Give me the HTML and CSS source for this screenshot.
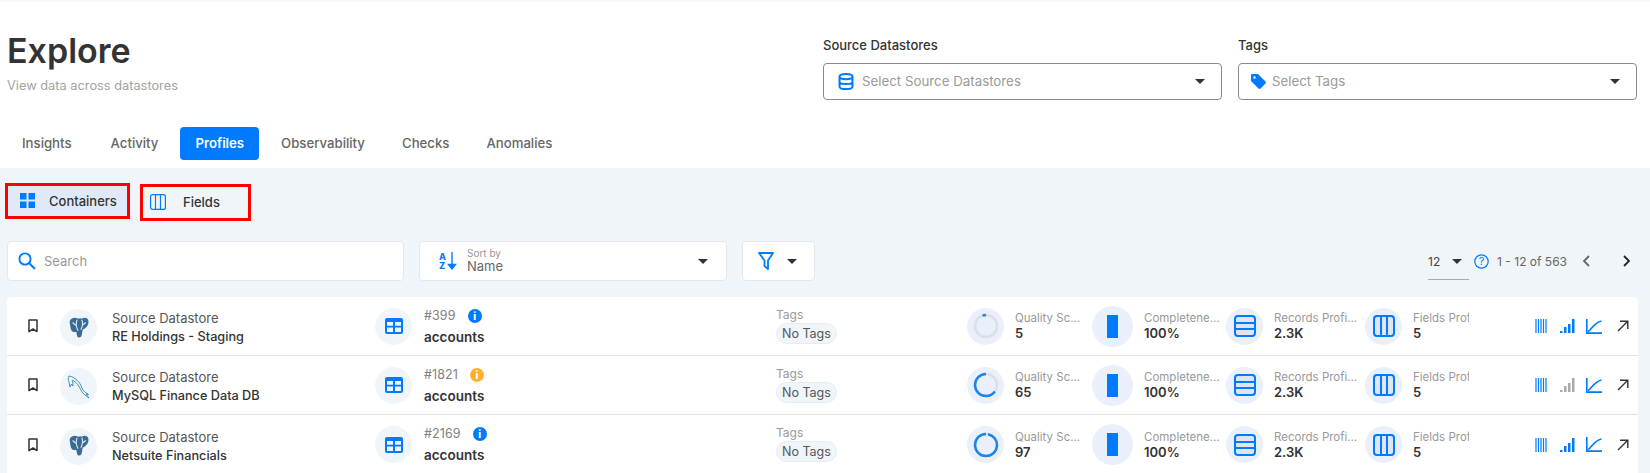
FILE: index.html
```html
<!DOCTYPE html>
<html>
	<head>
		<title>Explore</title>
		<link rel="stylesheet" href="styles.css">
	</head>
	<body>
		<svg class="defs" width="0" height="0">
			<symbol id="i-table" viewBox="0 0 18 16"><path fill="#007aff" fill-rule="evenodd" d="M2 0h14a2 2 0 0 1 2 2v12a2 2 0 0 1-2 2H2a2 2 0 0 1-2-2V2a2 2 0 0 1 2-2zM2 4v3.8h6V4zM10 4v3.8h6V4zM2 9.6V14h6V9.6zM10 9.6V14h6V9.6z"/></symbol>
			<symbol id="i-rows" viewBox="0 0 22 22"><rect x="1" y="1" width="20" height="20" rx="3" fill="#dfe6f2" stroke="#007aff" stroke-width="2"/><path d="M1 8h20M1 14h20" stroke="#007aff" stroke-width="2"/></symbol>
			<symbol id="i-cols" viewBox="0 0 22 22"><rect x="1" y="1" width="20" height="20" rx="3" fill="#dfe6f2" stroke="#007aff" stroke-width="2"/><path d="M8 1v20M14 1v20" stroke="#007aff" stroke-width="2"/></symbol>
			<symbol id="i-mark" viewBox="0 0 12 14"><path d="M2 1h8v11.6L6 10 2 12.6z" fill="none" stroke="#333" stroke-width="1.5" stroke-linejoin="round"/></symbol>
			<symbol id="i-pg" viewBox="0 0 24 24"><path fill="#3a6a96" d="M4 2c3-2 5-1 7 0 2-1 3-1 4 0 3-2 6-1 7 1 1 3 0 6-2 8-1 1-2 2-4 3l-1 6c-1 3-4 3-5 1l-1-5c-3 1-5 0-6-3L2 7c-.5-2 0-4 2-5z"/><path d="M10 3c-1.500 3-1.500 7 1 12M15 3c1.500 3 1 7-1 11M5 6l3.500 3M19.500 6l-4 3" fill="none" stroke="#dfe8f0" stroke-width="1.200"/></symbol>
			<symbol id="i-my" viewBox="0 0 24 24"><path d="M2 1c-1 2-1 4 0 6l1 5 1.500-3 1.500 2c0-2 0-4-1-5 0-1 1-1 2 0 3 2 5 5 7 9 1 3 4 5 8 8l-3-4 2.500.5c-3-2-5-3-6.500-6.500C13 7 8 2 2 1z" fill="none" stroke="#2f86a8" stroke-width=".9" stroke-linejoin="round"/></symbol>
			<symbol id="i-bars" viewBox="0 0 12 14"><path d="M1 0v14M3.5 0v14M6 0v14M8.5 0v14M11 0v14" stroke="#007aff" stroke-width="1.2"/></symbol>
			<symbol id="i-chart" viewBox="0 0 16 15"><path d="M.8 0v14.100H16M2 12.500C6 11 7 4 15.500 2" fill="none" stroke="#007aff" stroke-width="1.600"/></symbol>
			<symbol id="i-open" viewBox="0 0 12 12"><path d="M1 11 10.5 1.500M3 1.200h7.800V9" fill="none" stroke="#333" stroke-width="1.400"/></symbol>
		</svg>

		<header class="top">
			<div class="title">
				<h1>Explore</h1>
				<p>View data across datastores</p>
			</div>
			<div class="selects">
				<div class="field">
					<label>Source Datastores</label>
					<div class="select">
						<svg class="select-icon" width="16" height="17" viewBox="0 0 16 17"><path d="M8 1c3.600 0 6.500 1 6.500 2.600v9.800C14.500 15 11.600 16 8 16s-6.500-1-6.500-2.600V3.600C1.500 2 4.400 1 8 1zM1.500 3.600C1.500 5.200 4.400 6.200 8 6.200s6.500-1 6.500-2.600M1.500 8.500c0 1.600 2.900 2.600 6.500 2.600s6.500-1 6.500-2.600" fill="none" stroke="#007aff" stroke-width="2"/></svg>
						<span>Select Source Datastores</span>
						<i class="caret"></i>
					</div>
				</div>
				<div class="field">
					<label>Tags</label>
					<div class="select tags-select">
						<svg class="select-icon" width="15" height="15" viewBox="0 0 15 15"><path fill="#007aff" fill-rule="evenodd" d="M1 0h6l7.500 7.500a1.500 1.500 0 0 1 0 2L9.500 14.500a1.500 1.500 0 0 1-2 0L0 7V1a1 1 0 0 1 1-1zM3.500 2.300a1.200 1.200 0 1 0 0 2.400 1.200 1.200 0 0 0 0-2.400z"/></svg>
						<span>Select Tags</span>
						<i class="caret"></i>
					</div>
				</div>
			</div>
		</header>

		<nav class="tabs">
			<a>Insights</a>
			<a>Activity</a>
			<a class="active">Profiles</a>
			<a>Observability</a>
			<a>Checks</a>
			<a>Anomalies</a>
		</nav>

		<main class="panel">
			<div class="views">
				<div class="view view-on">
					<svg width="15" height="15" viewBox="0 0 15 15"><path fill="#007aff" d="M0 0h6.500v6.500H0zM8.500 0H15v6.500H8.500zM0 8.500h6.500V15H0zM8.500 8.500H15V15H8.500z"/></svg>
					Containers
				</div>
				<div class="view view-fields">
					<svg width="16" height="16" viewBox="0 0 16 16"><rect x=".6" y=".6" width="14.800" height="14.800" rx="2" fill="none" stroke="#007aff" stroke-width="1.200"/><path d="M5.500 1v14M10.500 1v14" stroke="#007aff" stroke-width="1.200"/></svg>
					Fields
				</div>
			</div>

			<div class="toolbar">
				<div class="box search">
					<svg width="18" height="18" viewBox="0 0 18 18"><circle cx="7" cy="7" r="5.600" fill="none" stroke="#007aff" stroke-width="1.900"/><path d="M11 11l6 6" stroke="#007aff" stroke-width="2"/></svg>
					<span>Search</span>
				</div>
				<div class="box sort">
					<svg width="18" height="18" viewBox="0 0 18 18"><text x="0" y="8" class="az">A</text><text x="0" y="17" class="az">Z</text><path d="M13 0v15M9.500 12.500 13 17l3.500-4.500z" stroke="#007aff" stroke-width="1.400" fill="#007aff"/></svg>
					<div class="sort-text">
						<small>Sort by</small>
						<span>Name</span>
					</div>
					<i class="caret"></i>
				</div>
				<div class="box filter">
					<svg width="16" height="18" viewBox="0 0 16 18"><path d="M1 1h14L10 8.500V17L6.500 14V8.500z" fill="none" stroke="#007aff" stroke-width="1.800" stroke-linejoin="round"/></svg>
					<i class="caret"></i>
				</div>
				<div class="pager">
					<div class="per-page"><span>12</span><i class="caret"></i></div>
					<svg class="help" width="15" height="15" viewBox="0 0 15 15"><circle cx="7.500" cy="7.500" r="6.700" fill="none" stroke="#007aff" stroke-width="1.200"/><text x="7.500" y="11.200" text-anchor="middle" class="qm">?</text></svg>
					<span class="count">1 - 12 of 563</span>
					<svg class="prev" width="8" height="12" viewBox="0 0 8 12"><path d="M7 1 2 6l5 5" fill="none" stroke="#666" stroke-width="1.800"/></svg>
					<svg class="next" width="8" height="12" viewBox="0 0 8 12"><path d="M1 1l5 5-5 5" fill="none" stroke="#222" stroke-width="1.800"/></svg>
				</div>
			</div>

			<div class="card">
				<div class="row">
					<svg class="mark" width="12" height="14"><use href="#i-mark"/></svg>
					<div class="cell cell-ds">
						<div class="disc low"><svg width="22" height="22"><use href="#i-pg"/></svg></div>
						<div class="names"><span>Source Datastore</span><b>RE Holdings - Staging</b></div>
					</div>
					<div class="cell cell-id">
						<div class="disc"><svg width="18" height="16"><use href="#i-table"/></svg></div>
						<div class="names"><div class="ident">#399<i class="dot">i</i></div><b class="bold">accounts</b></div>
					</div>
					<div class="tags"><span>Tags</span><em>No Tags</em></div>
					<div class="cell">
						<div class="disc tint"><svg class="ring" width="26" height="26" viewBox="0 0 26 26"><circle cx="13" cy="13" r="11" class="track"/><circle cx="13" cy="13" r="11" class="arc" pathLength="100" stroke-dasharray="5 100"/></svg></div>
						<div class="metric m-q"><span>Quality Score</span><b>5</b></div>
					</div>
					<div class="cell">
						<div class="disc tint big"><i class="fill"></i></div>
						<div class="metric m-c"><span>Completeness</span><b>100%</b></div>
					</div>
					<div class="cell">
						<div class="disc tint"><svg width="22" height="22"><use href="#i-rows"/></svg></div>
						<div class="metric m-r"><span>Records Profiled</span><b>2.3K</b></div>
					</div>
					<div class="cell">
						<div class="disc tint"><svg width="22" height="22"><use href="#i-cols"/></svg></div>
						<div class="metric m-f"><span>Fields Profiled</span><b>5</b></div>
					</div>
					<div class="actions">
						<svg width="12" height="14"><use href="#i-bars"/></svg>
						<svg width="15" height="14" viewBox="0 0 15 14"><path fill="#007aff" d="M0 12h2.500v2H0zM4 8h2.500v6H4zM8 5h2.500v9H8zM12 0h2.500v14H12z"/></svg>
						<svg class="trend" width="16" height="15"><use href="#i-chart"/></svg>
						<svg width="12" height="12"><use href="#i-open"/></svg>
					</div>
				</div>

				<div class="row">
					<svg class="mark" width="12" height="14"><use href="#i-mark"/></svg>
					<div class="cell cell-ds">
						<div class="disc low"><svg width="24" height="24"><use href="#i-my"/></svg></div>
						<div class="names"><span>Source Datastore</span><b>MySQL Finance Data DB</b></div>
					</div>
					<div class="cell cell-id">
						<div class="disc"><svg width="18" height="16"><use href="#i-table"/></svg></div>
						<div class="names"><div class="ident">#1821<i class="dot warn">i</i></div><b class="bold">accounts</b></div>
					</div>
					<div class="tags"><span>Tags</span><em>No Tags</em></div>
					<div class="cell">
						<div class="disc tint"><svg class="ring" width="26" height="26" viewBox="0 0 26 26"><circle cx="13" cy="13" r="11" class="track"/><circle cx="13" cy="13" r="11" class="arc" pathLength="100" stroke-dasharray="65 100"/></svg></div>
						<div class="metric m-q"><span>Quality Score</span><b>65</b></div>
					</div>
					<div class="cell">
						<div class="disc tint big"><i class="fill"></i></div>
						<div class="metric m-c"><span>Completeness</span><b>100%</b></div>
					</div>
					<div class="cell">
						<div class="disc tint"><svg width="22" height="22"><use href="#i-rows"/></svg></div>
						<div class="metric m-r"><span>Records Profiled</span><b>2.3K</b></div>
					</div>
					<div class="cell">
						<div class="disc tint"><svg width="22" height="22"><use href="#i-cols"/></svg></div>
						<div class="metric m-f"><span>Fields Profiled</span><b>5</b></div>
					</div>
					<div class="actions">
						<svg width="12" height="14"><use href="#i-bars"/></svg>
						<svg width="15" height="14" viewBox="0 0 15 14"><path fill="#aaa" d="M0 12h2.500v2H0zM4 8h2.500v6H4zM8 5h2.500v9H8zM12 0h2.500v14H12z"/></svg>
						<svg class="trend" width="16" height="15"><use href="#i-chart"/></svg>
						<svg width="12" height="12"><use href="#i-open"/></svg>
					</div>
				</div>

				<div class="row">
					<svg class="mark" width="12" height="14"><use href="#i-mark"/></svg>
					<div class="cell cell-ds">
						<div class="disc low"><svg width="22" height="22"><use href="#i-pg"/></svg></div>
						<div class="names"><span>Source Datastore</span><b>Netsuite Financials</b></div>
					</div>
					<div class="cell cell-id">
						<div class="disc"><svg width="18" height="16"><use href="#i-table"/></svg></div>
						<div class="names"><div class="ident">#2169<i class="dot">i</i></div><b class="bold">accounts</b></div>
					</div>
					<div class="tags"><span>Tags</span><em>No Tags</em></div>
					<div class="cell">
						<div class="disc tint"><svg class="ring" width="26" height="26" viewBox="0 0 26 26"><circle cx="13" cy="13" r="11" class="track"/><circle cx="13" cy="13" r="11" class="arc" pathLength="100" stroke-dasharray="97 100"/></svg></div>
						<div class="metric m-q"><span>Quality Score</span><b>97</b></div>
					</div>
					<div class="cell">
						<div class="disc tint big"><i class="fill"></i></div>
						<div class="metric m-c"><span>Completeness</span><b>100%</b></div>
					</div>
					<div class="cell">
						<div class="disc tint"><svg width="22" height="22"><use href="#i-rows"/></svg></div>
						<div class="metric m-r"><span>Records Profiled</span><b>2.3K</b></div>
					</div>
					<div class="cell">
						<div class="disc tint"><svg width="22" height="22"><use href="#i-cols"/></svg></div>
						<div class="metric m-f"><span>Fields Profiled</span><b>5</b></div>
					</div>
					<div class="actions">
						<svg width="12" height="14"><use href="#i-bars"/></svg>
						<svg width="15" height="14" viewBox="0 0 15 14"><path fill="#007aff" d="M0 12h2.500v2H0zM4 8h2.500v6H4zM8 5h2.500v9H8zM12 0h2.500v14H12z"/></svg>
						<svg class="trend" width="16" height="15"><use href="#i-chart"/></svg>
						<svg width="12" height="12"><use href="#i-open"/></svg>
					</div>
				</div>
			</div>
		</main>
	</body>
</html>
```

FILE: styles.css
```css
html, body {
	margin: 0;
	height: 473px;
	overflow: hidden;
}

body {
	background: #fff;
	color: #333;
	font-family: Inter, "Noto Sans", sans-serif;
	font-size: 13px;
	border-top: 2px solid #f8f8f8;
	box-sizing: border-box;
}

.defs {
	display: block;
	height: 0;
}

.caret {
	display: block;
	width: 0;
	height: 0;
	border-left: 5px solid transparent;
	border-right: 5px solid transparent;
	border-top: 5px solid #333;
}

/* header */
.top {
	display: flex;
	justify-content: space-between;
	padding: 28px 13px 0 7px;
}

.title h1 {
	margin: 0;
	font-size: 34px;
	line-height: 42px;
	font-weight: 600;
}

.title p {
	margin: 5px 0 0;
	font-size: 12.800px;
	line-height: 18px;
	color: #a3a3a3;
}

.selects {
	display: flex;
	gap: 16px;
}

.field label {
	display: block;
	font-size: 13px;
	font-weight: 500;
	line-height: 18px;
	margin: 6px 0 9px;
}

.select {
	width: 399px;
	height: 37px;
	box-sizing: border-box;
	border: 1px solid #8a8a8a;
	border-radius: 4px;
	display: flex;
	align-items: center;
	padding: 0 16px 1px 14px;
	color: #9a9a9a;
	font-size: 13.300px;
}

.select span {
	margin-left: 8px;
	flex: 1;
}

.tags-select {
	padding-left: 12px;
}

.tags-select span {
	margin-left: 6px;
}

/* tabs */
.tabs {
	display: flex;
	gap: 7px;
	height: 33px;
	padding-left: 7px;
	margin-top: 27px;
	margin-bottom: 8px;
}

.tabs a {
	display: flex;
	align-items: center;
	padding: 0 15px 1px;
	border-radius: 4px;
	color: #666;
	font-weight: 500;
	font-size: 13.200px;
}

.tabs a:first-child {
	margin-right: 2px;
}

.tabs a.active {
	background: #007aff;
	color: #fff;
	font-weight: 600;
}

/* blue panel */
.panel {
	background: #f0f5fa;
	padding: 15px 12px 0 7px;
	height: 305px;
	box-sizing: border-box;
}

.views {
	display: flex;
	align-items: flex-start;
	gap: 10px;
	margin-left: -2px;
	margin-bottom: 20px;
}

.view {
	display: flex;
	align-items: center;
	box-sizing: border-box;
	height: 36px;
	border: 3px solid #f00;
	padding-bottom: 1px;
	font-size: 13px;
	font-weight: 500;
	gap: 14px;
}

.view-on {
	width: 125px;
	padding-left: 12px;
	background: #dfe9f7;
}

.view-fields {
	width: 111px;
	height: 37px;
	margin-top: 1px;
	padding-left: 7px;
	gap: 17px;
}

/* toolbar */
.toolbar {
	display: flex;
	gap: 15px;
	align-items: center;
	margin-bottom: 16px;
}

.box {
	display: flex;
	align-items: center;
	box-sizing: border-box;
	height: 40px;
	background: #fff;
	border: 1px solid #e4e8ee;
	border-radius: 4px;
}

.search {
	width: 397px;
	padding-left: 10px;
	gap: 8px;
	color: #999;
}

.sort {
	width: 308px;
	padding: 0 18px 0 19px;
	gap: 10px;
}

.az {
	font-size: 9px;
	font-weight: 800;
	fill: #007aff;
}

.sort-text {
	flex: 1;
	display: flex;
	flex-direction: column;
	line-height: 13px;
	margin-top: -2px;
}

.sort-text small {
	font-size: 10px;
	color: #999;
}

.sort-text span {
	font-size: 13px;
	color: #666;
}

.filter {
	width: 73px;
	padding-left: 15px;
	gap: 13px;
}

.pager {
	margin-left: auto;
	display: flex;
	align-items: center;
	padding-right: 7px;
	color: #666;
	font-size: 12px;
}

.per-page {
	box-sizing: border-box;
	width: 41px;
	height: 36px;
	margin-top: 1px;
	display: flex;
	align-items: center;
	justify-content: space-between;
	border-bottom: 1px solid #aaa;
	color: #444;
	padding-right: 7px;
}

.help {
	margin-left: 5px;
}

.qm {
	font-size: 11px;
	fill: #007aff;
}

.count {
	margin-left: 8px;
}

.prev {
	margin-left: 15px;
}

.next {
	margin-left: 33px;
}

/* rows */
.card {
	background: #fff;
	border-radius: 4px 4px 0 0;
}

.row {
	display: grid;
	grid-template-columns: 53px 315px 401px 191px 125px 134px 139px 170px auto;
	align-items: center;
	height: 59px;
	box-sizing: border-box;
	border-bottom: 1px solid #e3e3e3;
}

.row:last-child {
	border-bottom: 0;
}

.mark {
	margin-left: 20px;
}

.cell {
	display: flex;
	align-items: center;
	gap: 11px;
	min-width: 0;
}

.cell-ds {
	gap: 15px;
}

.cell-ds .names {
	gap: 1px;
	margin-top: 3px;
}

.cell-id {
	gap: 12px;
}

.disc {
	flex: none;
	width: 37px;
	height: 37px;
	border-radius: 50%;
	background: #f0f5fa;
	display: flex;
	align-items: center;
	justify-content: center;
}

.disc.low {
	margin-top: 3px;
}

.disc.tint {
	background: #e9f0fb;
}

.disc.big {
	width: 41px;
	height: 41px;
}

.fill {
	display: block;
	width: 11px;
	height: 23px;
	background: #007aff;
}

.ring {
	transform: rotate(-90deg) scaleY(-1);
}

.ring circle {
	fill: none;
	stroke-width: 2.500;
}

.ring .track {
	stroke: #dcdfe4;
}

.ring .arc {
	stroke: #1a84f0;
}

.names {
	display: flex;
	flex-direction: column;
	gap: 3px;
	line-height: 18px;
}

.names span {
	font-size: 13px;
	color: #555;
}

.names b {
	font-size: 12.700px;
	font-weight: 500;
}

.names b.bold {
	font-size: 13.500px;
	font-weight: 600;
}

.ident {
	display: flex;
	align-items: center;
	gap: 12px;
	color: #808080;
	font-size: 12.500px;
	letter-spacing: .1px;
}

.dot {
	width: 14px;
	height: 14px;
	border-radius: 50%;
	background: #007aff;
	color: #fff;
	font-style: normal;
	font-weight: 800;
	font-size: 10px;
	line-height: 14px;
	text-align: center;
	letter-spacing: 0;
}

.dot.warn {
	background: #ffb02e;
}

.tags {
	display: flex;
	flex-direction: column;
	align-items: flex-start;
	gap: 1px;
	margin-top: -2px;
	font-size: 12px;
	color: #999;
	line-height: 15px;
}

.tags em {
	font-style: normal;
	font-size: 12.500px;
	color: #555;
	background: #f0f5fa;
	border: 1px solid #e6ecf5;
	border-radius: 11px;
	line-height: 19px;
	padding: 0 5px;
}

.metric {
	display: flex;
	flex-direction: column;
	line-height: 15px;
	min-width: 0;
}

.metric span {
	font-size: 11.500px;
	color: #999;
	white-space: nowrap;
	overflow: hidden;
	text-overflow: ellipsis;
}

.metric b {
	font-size: 13px;
	font-weight: 600;
}

.m-q { width: 70px; }
.m-c { width: 76px; }
.m-r { width: 86px; }

.m-f { width: 56px; }
.m-f span { text-overflow: clip; }

.actions {
	display: flex;
	align-items: center;
	gap: 13px;
}

.actions svg {
	display: block;
}

.actions .trend {
	margin-left: -2px;
	margin-right: 2px;
}
```
